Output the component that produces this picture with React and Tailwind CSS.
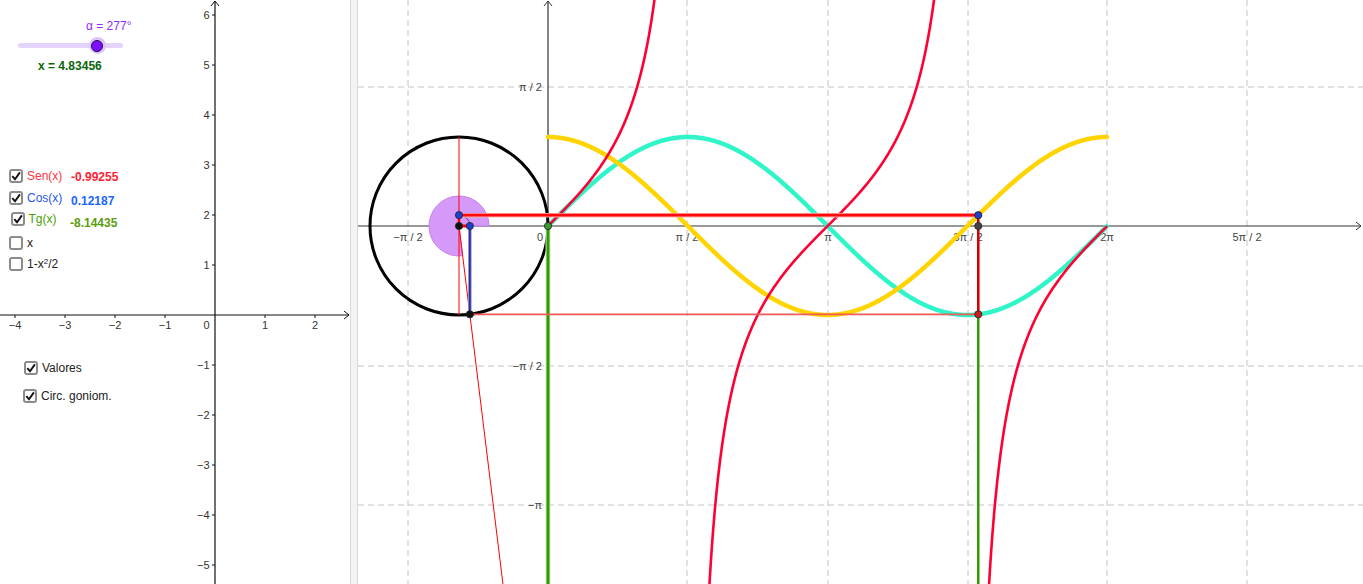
import React from 'react';

const U = 89;
const OX = 548;
const OY = 226;
const X = (x) => OX + U * x;
const Y = (y) => OY - U * y;
const PI = Math.PI;

function curvePath(f, a, b, step = 0.004) {
  const pts = [];
  for (let t = a; t <= b + 1e-9; t += step) {
    let y = Y(f(t));
    y = Math.max(-20, Math.min(604, y));
    pts.push(`${X(t).toFixed(2)},${y.toFixed(2)}`);
  }
  return 'M' + pts.join(' L');
}

const ALPHA = (277 * PI) / 180;
const COS = Math.cos(ALPHA);
const SIN = Math.sin(ALPHA);
const CX = 459;
const CY = 226;

const LEFT_Y = [6, 5, 4, 3, 2, 1, -1, -2, -3, -4, -5];
const LEFT_X = [-4, -3, -2, -1, 1, 2];

function LeftGraph() {
  return (
    <svg className="absolute inset-0" width="350" height="584" viewBox="0 0 350 584">
      <line x1="215" y1="1" x2="215" y2="584" stroke="#111" strokeWidth="1.2" />
      <path d="M211 6 L215 1 L219 6" fill="none" stroke="#111" strokeWidth="1" />
      <line x1="0" y1="315" x2="349" y2="315" stroke="#111" strokeWidth="1.2" />
      <path d="M344 311 L349 315 L344 319" fill="none" stroke="#111" strokeWidth="1" />
      {LEFT_Y.map((v) => (
        <g key={v}>
          <line x1="212" y1={315 - v * 50} x2="215" y2={315 - v * 50} stroke="#111" />
          <text x="209.5" y={315 - v * 50 + 4} textAnchor="end" fontSize="11" fill="#333">
            {v < 0 ? `\u2212${-v}` : v}
          </text>
        </g>
      ))}
      {LEFT_X.map((v) => (
        <g key={v}>
          <line x1={215 + v * 50} y1="315" x2={215 + v * 50} y2="318" stroke="#111" />
          <text x={215 + v * 50} y="329" textAnchor="middle" fontSize="11" fill="#333">
            {v < 0 ? `\u2212${-v}` : v}
          </text>
        </g>
      ))}
      <text x="209.5" y="329" textAnchor="end" fontSize="11" fill="#333">0</text>
    </svg>
  );
}

function RightGraph() {
  const gridX = [408, 687, 828, 968, 1107, 1247];
  const gridY = [87, 366, 505];
  const px = X(ALPHA);
  const sinY = Y(SIN);
  const cosY = Y(COS);
  const ptx = CX + U * COS;
  const sa = 30;
  const endX = CX + sa * Math.cos(ALPHA);
  const endY = CY - sa * Math.sin(ALPHA);
  const tanEndX = CX + ((584 - CY) / -SIN) * COS;

  const xLabels = [
    [408, '\u2212\u03c0 / 2'],
    [687, '\u03c0 / 2'],
    [828, '\u03c0'],
    [968, '3\u03c0 / 2'],
    [1107, '2\u03c0'],
    [1247, '5\u03c0 / 2'],
  ];
  const yLabels = [
    [87, '\u03c0 / 2'],
    [366, '\u2212\u03c0 / 2'],
    [505, '\u2212\u03c0'],
  ];

  return (
    <svg className="absolute inset-0" width="1005" height="584" viewBox="358 0 1005 584">
      {gridX.map((g) => (
        <line key={g} x1={g} y1="0" x2={g} y2="584" stroke="#c4c4c4" strokeDasharray="6 4" />
      ))}
      {gridY.map((g) => (
        <line key={g} x1="358" y1={g} x2="1363" y2={g} stroke="#c4c4c4" strokeDasharray="6 4" />
      ))}
      <line x1="358" y1={OY} x2="1361" y2={OY} stroke="#333" strokeWidth="1.2" />
      <path d={`M1356 ${OY - 4} L1361 ${OY} L1356 ${OY + 4}`} fill="none" stroke="#333" />
      <line x1={OX} y1="1" x2={OX} y2="584" stroke="#333" strokeWidth="1.2" />
      <path d={`M${OX - 4} 6 L${OX} 1 L${OX + 4} 6`} fill="none" stroke="#333" />

      {xLabels.map(([x, t]) => (
        <text key={t} x={x} y="241" textAnchor="middle" fontSize="11" fill="#444">{t}</text>
      ))}
      <text x="540" y="241" textAnchor="middle" fontSize="11" fill="#444">0</text>
      {yLabels.map(([y, t]) => (
        <text key={t} x="542" y={y + 4} textAnchor="end" fontSize="11" fill="#444">{t}</text>
      ))}

      <path d={curvePath(Math.sin, 0, 2 * PI)} fill="none" stroke="#2ff5c9" strokeWidth="4.5" strokeLinecap="round" />
      <path d={curvePath(Math.cos, 0, 2 * PI)} fill="none" stroke="#ffd400" strokeWidth="4.5" strokeLinecap="round" />
      <path d={curvePath(Math.tan, 0, PI / 2 - 0.002)} fill="none" stroke="#ff0033" strokeWidth="2.6" />
      <path d={curvePath(Math.tan, PI / 2 + 0.002, (3 * PI) / 2 - 0.002)} fill="none" stroke="#ff0033" strokeWidth="2.6" />
      <path d={curvePath(Math.tan, (3 * PI) / 2 + 0.002, 2 * PI)} fill="none" stroke="#ff0033" strokeWidth="2.6" />

      <path
        d={`M${CX} ${CY} L${CX + sa} ${CY} A${sa} ${sa} 0 1 0 ${endX.toFixed(2)} ${endY.toFixed(2)} Z`}
        fill="#d59af8"
        stroke="#c47ff2"
        strokeWidth="1"
      />
      <path d={`M${CX} ${CY - 11} A11 11 0 0 1 ${CX + 11} ${CY}`} fill="none" stroke="#6a4a80" strokeWidth="1" />
      <circle cx={CX} cy={CY} r={U} fill="none" stroke="#000" strokeWidth="3" />

      <line x1={OX} y1={OY} x2={OX} y2="584" stroke="#cfeac0" strokeWidth="5" />
      <line x1={OX} y1={OY} x2={OX} y2="584" stroke="#339900" strokeWidth="3" />
      <line x1={px} y1={sinY} x2={px} y2="584" stroke="#339900" strokeWidth="2.5" />

      <line x1={CX} y1={CY - U} x2={CX} y2={CY + U} stroke="#ff0000" strokeWidth="1" />
      <line x1={CX} y1={CY} x2={tanEndX} y2="584" stroke="#ff0000" strokeWidth="1" />
      <line x1={ptx} y1={sinY} x2={px} y2={sinY} stroke="#f05a5a" strokeWidth="1.8" />
      <line x1={CX} y1={cosY} x2={px} y2={cosY} stroke="#ffb0b0" strokeWidth="4.5" />
      <line x1={CX} y1={cosY} x2={px} y2={cosY} stroke="#ff0a0a" strokeWidth="2.6" />
      <line x1={px} y1={cosY} x2={px} y2={sinY} stroke="#d40000" strokeWidth="2.6" />
      <line x1={CX} y1={CY} x2={ptx} y2={CY} stroke="#ff0000" strokeWidth="3" />
      <line x1={CX} y1={cosY} x2={CX} y2={CY} stroke="#ff0000" strokeWidth="2.5" />
      <line x1={ptx} y1={CY} x2={ptx} y2={sinY} stroke="#8a8ad0" strokeWidth="3.5" />
      <line x1={ptx} y1={CY} x2={ptx} y2={sinY} stroke="#2a2a90" strokeWidth="1.6" />

      {[
        [CX, cosY, '#1f3fd0'],
        [CX, CY, '#111'],
        [ptx, CY, '#1f3fd0'],
        [ptx, sinY, '#111'],
        [OX, OY, '#3a9a30'],
        [px, cosY, '#1f3fd0'],
        [px, CY, '#444'],
        [px, sinY, '#c81e1e'],
      ].map(([x, y, c], i) => (
        <circle key={i} cx={x} cy={y} r="3.6" fill={c} stroke="#222" strokeWidth="0.8" />
      ))}
    </svg>
  );
}

function Check({ checked }) {
  return (
    <span className="flex h-[14px] w-[14px] shrink-0 items-center justify-center rounded-[3px] border-2 border-[#8c8c8c] bg-white">
      {checked ? (
        <svg viewBox="0 0 10 10" width="10" height="10">
          <path d="M1.3 5.2 L4 8.2 L8.9 1.4" fill="none" stroke="#111" strokeWidth="1.9" />
        </svg>
      ) : null}
    </span>
  );
}

function Row({ left, top, checked, label, color, gap = 'gap-[4px]' }) {
  return (
    <div className={`absolute flex items-center ${gap}`} style={{ left, top }}>
      <Check checked={checked} />
      <span className="text-[12px] leading-[14px]" style={{ color }}>{label}</span>
    </div>
  );
}

function Value({ left, top, color, children }) {
  return (
    <span className="absolute text-[12px] font-bold leading-[14px]" style={{ left, top, color }}>
      {children}
    </span>
  );
}

export default function App() {
  return (
    <div className="flex h-[584px] w-[1363px] overflow-hidden bg-white font-['Liberation_Sans',Arial,sans-serif]">
      <div className="relative h-full w-[350px] shrink-0">
        <LeftGraph />

        <span className="absolute left-[86px] top-[19px] text-[12px] leading-[14px] text-[#8f2bff]">
          α = 277°
        </span>
        <div className="absolute left-[18px] top-[43px] h-[5px] w-[105px] rounded-full bg-[#e4d3fb]" />
        <div className="absolute left-[88.5px] top-[37px] flex h-[17px] w-[17px] items-center justify-center rounded-full bg-[#dcc3fa]">
          <div className="h-[12px] w-[12px] rounded-full border border-[#2a0a50] bg-[#7a12ff]" />
        </div>
        <span className="absolute left-[38px] top-[59px] text-[12px] font-bold leading-[14px] text-[#0a650a]">
          x = 4.83456
        </span>

        <Row left={9} top={169} checked label="Sen(x)" color="#ff3344" />
        <Value left={71} top={170} color="#ff2233">-0.99255</Value>
        <Row left={9} top={191} checked label="Cos(x)" color="#2a55e8" />
        <Value left={71} top={194} color="#1a66ff">0.12187</Value>
        <Row left={10.5} top={212} checked label="Tg(x)" color="#4a9e00" />
        <Value left={70} top={216} color="#5a9e0a">-8.14435</Value>
        <Row left={9} top={236} checked={false} label="x" color="#222" />
        <Row
          left={9}
          top={257}
          checked={false}
          color="#222"
          label={
            <>
              1-x<sup className="text-[8px]">2</sup>/2
            </>
          }
        />
        <Row left={24} top={361} checked label="Valores" color="#222" />
        <Row left={23} top={389} checked label="Circ. goniom." color="#222" />
      </div>

      <div className="h-full w-[8px] shrink-0 border-x border-[#d8d8d8] bg-[#f3f3f3]" />

      <div className="relative h-full flex-1">
        <RightGraph />
      </div>
    </div>
  );
}
